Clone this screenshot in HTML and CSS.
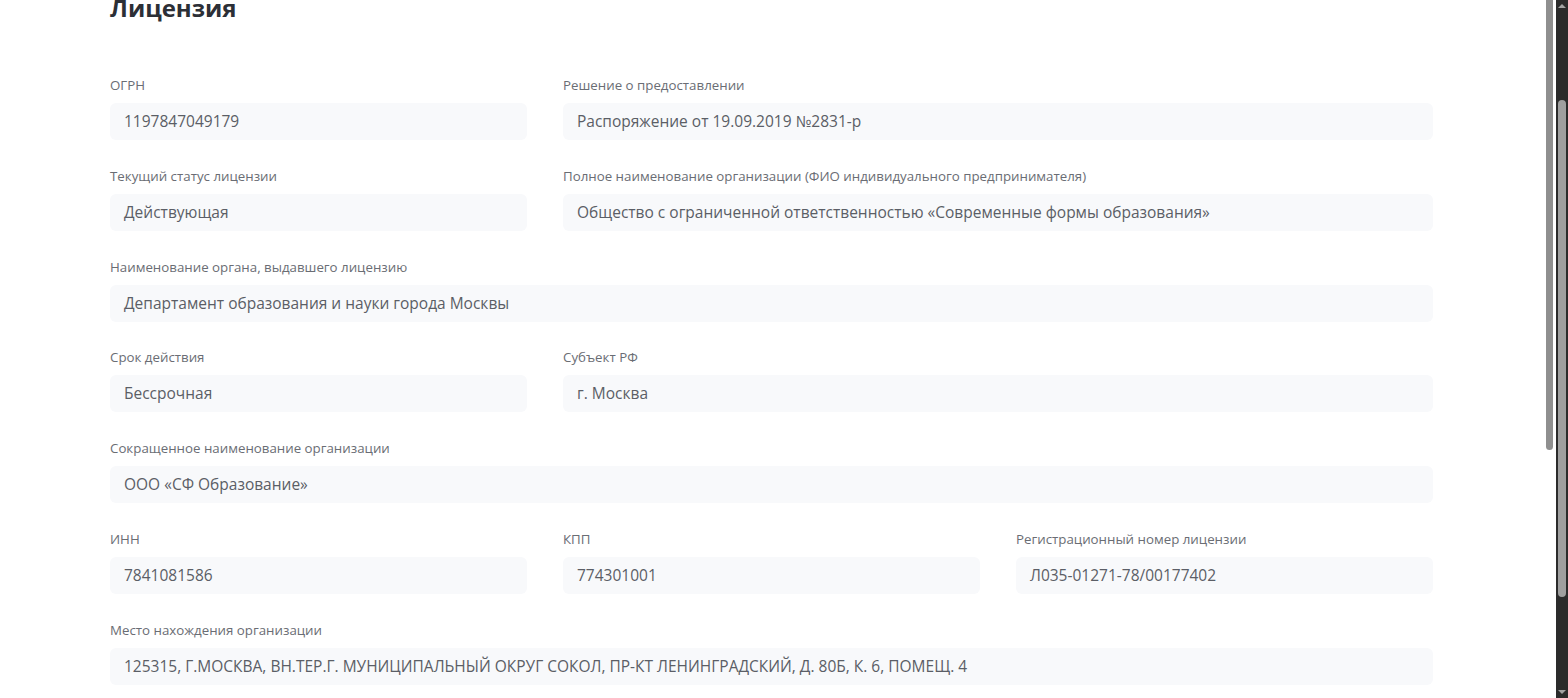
FILE: index.html
```html
<!DOCTYPE html>
<html lang="ru">
<head>
<meta charset="utf-8">
<title>Лицензия</title>
<link rel="stylesheet" href="styles.css">
</head>
<body>
<div class="window">
  <div class="viewport">
    <main class="content">
      <h1 class="title">Лицензия</h1>
      <div class="grid">
        <div class="field">
          <div class="label">ОГРН</div>
          <div class="value">1197847049179</div>
        </div>
        <div class="field span2">
          <div class="label">Решение о предоставлении</div>
          <div class="value">Распоряжение от 19.09.2019 №2831-р</div>
        </div>
        <div class="field">
          <div class="label">Текущий статус лицензии</div>
          <div class="value">Действующая</div>
        </div>
        <div class="field span2">
          <div class="label">Полное наименование организации (ФИО индивидуального предпринимателя)</div>
          <div class="value">Общество с ограниченной ответственностью «Современные формы образования»</div>
        </div>
        <div class="field span3">
          <div class="label">Наименование органа, выдавшего лицензию</div>
          <div class="value">Департамент образования и науки города Москвы</div>
        </div>
        <div class="field">
          <div class="label">Срок действия</div>
          <div class="value">Бессрочная</div>
        </div>
        <div class="field span2">
          <div class="label">Субъект РФ</div>
          <div class="value">г. Москва</div>
        </div>
        <div class="field span3">
          <div class="label">Сокращенное наименование организации</div>
          <div class="value">ООО «СФ Образование»</div>
        </div>
        <div class="field">
          <div class="label">ИНН</div>
          <div class="value">7841081586</div>
        </div>
        <div class="field">
          <div class="label">КПП</div>
          <div class="value">774301001</div>
        </div>
        <div class="field">
          <div class="label">Регистрационный номер лицензии</div>
          <div class="value">Л035-01271-78/00177402</div>
        </div>
        <div class="field span3">
          <div class="label">Место нахождения организации</div>
          <div class="value">125315, Г.МОСКВА, ВН.ТЕР.Г. МУНИЦИПАЛЬНЫЙ ОКРУГ СОКОЛ, ПР-КТ ЛЕНИНГРАДСКИЙ, Д. 80Б, К. 6, ПОМЕЩ. 4</div>
        </div>
      </div>
    </main>
    <div class="inner-scroll"><div class="inner-thumb"></div></div>
  </div>
  <div class="win-scroll">
    <div class="arrow up"></div>
    <div class="win-track"><div class="win-thumb"></div></div>
    <div class="arrow down"></div>
  </div>
</div>
</body>
</html>
```

FILE: styles.css
```css
* { box-sizing: border-box; }
html, body { margin: 0; padding: 0; background: #ffffff; }
body {
  font-family: "Open Sans", "Noto Sans", "DejaVu Sans", sans-serif;
  width: 1568px;
  height: 698px;
  overflow: hidden;
}
.window {
  display: flex;
  width: 1568px;
  height: 698px;
}
.viewport {
  flex: 1;
  display: flex;
  min-width: 0;
}
.content {
  flex: 1;
  padding-left: 110px;
  overflow: hidden;
}
.title {
  margin: -8px 0 0 0;
  font-size: 24px;
  line-height: 32px;
  font-weight: 700;
  color: #2c2f36;
}
.grid {
  margin-top: 52px;
  display: grid;
  grid-template-columns: repeat(3, 417px);
  column-gap: 36px;
  row-gap: 26.8px;
}
.field { display: flex; flex-direction: column; gap: 9px; }
.span2 { grid-column: span 2; }
.span3 { grid-column: span 3; }
.label {
  font-size: 13.3px;
  line-height: 18px;
  color: #6a6d74;
  white-space: nowrap;
}
.value {
  height: 37px;
  background: #f8f9fb;
  border-radius: 6px;
  padding: 0 14px;
  font-size: 15.5px;
  line-height: 37px;
  color: #5b5e66;
  white-space: nowrap;
}
.inner-scroll {
  width: 7px;
  margin-right: 3px;
}
.inner-thumb {
  height: 450px;
  background: #8f8f8f;
  border-radius: 0 0 4px 4px;
}
.win-scroll {
  width: 12px;
  background: #2b2b2b;
  display: flex;
  flex-direction: column;
  align-items: center;
}
.arrow { width: 0; height: 0; border-left: 4px solid transparent; border-right: 4px solid transparent; }
.arrow.up { border-bottom: 4px solid #a3a3a3; margin-top: 4px; }
.arrow.down { border-top: 4px solid #a3a3a3; margin-bottom: 4px; }
.win-track { flex: 1; width: 100%; padding: 92px 2px 0 2px; }
.win-thumb { height: 497px; background: #9f9f9f; border-radius: 4px; }
```
